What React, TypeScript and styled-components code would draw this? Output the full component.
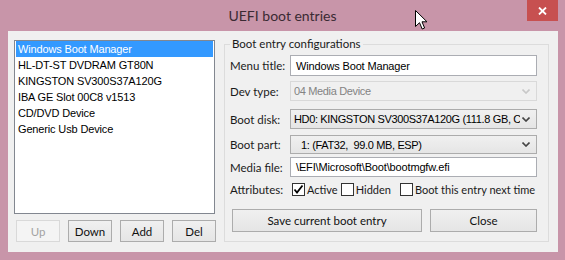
import React from "react";
import styled, { createGlobalStyle, css } from "styled-components";

const GlobalStyle = createGlobalStyle`
  html, body { margin: 0; padding: 0; background: #c895a9; }
  body { font-family: "Liberation Sans", Arial, sans-serif; }
  * { box-sizing: border-box; }
`;

const uiFont = `"Lato", "Liberation Sans", sans-serif`;
const ctlFont = `"Liberation Sans", Arial, sans-serif`;

const Window = styled.div`
  position: relative;
  width: 565px;
  height: 260px;
  background: #c895a9;
  display: flex;
  flex-direction: column;
  overflow: hidden;
`;

const TitleBar = styled.div`
  height: 31px;
  display: grid;
  grid-template-columns: 1fr auto 1fr;
  align-items: start;
`;

const Title = styled.div`
  font-family: ${uiFont};
  font-size: 14px;
  color: #3a2a33;
  line-height: 31px;
`;

const TitleRight = styled.div`
  display: flex;
  justify-content: flex-end;
  padding-right: 7px;
`;

const CloseButton = styled.div`
  width: 31px;
  height: 21px;
  background: #c75050;
  display: flex;
  align-items: center;
  justify-content: center;
`;

const Client = styled.div`
  flex: 1;
  margin: 0 7px 8px 8px;
  background: #f0f0f0;
  display: flex;
  align-items: flex-start;
  gap: 9px;
  padding: 5px 9px 10px 6px;
`;

const LeftColumn = styled.div`
  margin-top: 4px;
  width: 201px;
  flex: none;
  display: flex;
  flex-direction: column;
  gap: 6px;
`;

const ListBox = styled.div`
  height: 174px;
  background: #ffffff;
  border: 1px solid #828790;
  padding: 0 1px;
`;

const ListItem = styled.div<{ $selected?: boolean }>`
  height: 16px;
  line-height: 16px;
  padding-left: 2px;
  font-family: ${ctlFont};
  font-size: 11px;
  letter-spacing: -0.15px;
  color: #000;
  white-space: nowrap;
  ${(p) =>
    p.$selected &&
    css`
      background: #3399ff;
      color: #fff;
    `}
`;

const ButtonRow = styled.div`
  display: flex;
  gap: 8px;
  padding-left: 2px;
`;

const PushButton = styled.div<{ $w: number; $h: number; $disabled?: boolean }>`
  width: ${(p) => p.$w}px;
  height: ${(p) => p.$h}px;
  flex: none;
  display: flex;
  align-items: center;
  justify-content: center;
  font-family: ${uiFont};
  font-size: 11.5px;
  color: #111;
  border: 1px solid #acacac;
  background: linear-gradient(#f0f0f0, #e5e5e5);
  ${(p) =>
    p.$disabled &&
    css`
      color: #a3a3a3;
      border-color: #d9d9d9;
      background: #f4f4f4;
    `}
`;

const Group = styled.fieldset`
  margin: 0;
  width: 325px;
  min-width: 0;
  flex: none;
  height: 206px;
  border: 1px solid #dcdcdc;
  padding: 3px 11px 9px 5px;
  display: flex;
  flex-direction: column;
`;

const Legend = styled.legend`
  padding: 0 2px;
  font-family: ${uiFont};
  font-size: 11.5px;
  line-height: 16px;
  color: #1a1a1a;
`;

const FieldRow = styled.div<{ $mt: number; $h: number }>`
  margin-top: ${(p) => p.$mt}px;
  height: ${(p) => p.$h}px;
  display: flex;
  align-items: center;
  min-width: 0;
`;

const Label = styled.div`
  width: 60px;
  flex: none;
  font-family: ${uiFont};
  font-size: 11.5px;
  color: #1a1a1a;
  white-space: nowrap;
`;

const TextBox = styled.div`
  flex: 1;
  min-width: 0;
  height: 100%;
  background: #fff;
  border: 1px solid #abadb3;
  display: flex;
  align-items: center;
  padding-left: 5px;
  font-family: ${ctlFont};
  font-size: 11px;
  letter-spacing: -0.15px;
  color: #000;
  white-space: pre;
  overflow: hidden;
`;

const Combo = styled.div<{ $disabled?: boolean; $indent?: number }>`
  flex: 1;
  min-width: 0;
  height: 100%;
  display: flex;
  align-items: center;
  padding-left: ${(p) => p.$indent ?? 3}px;
  padding-right: 3px;
  font-family: ${ctlFont};
  font-size: 11px;
  letter-spacing: -0.35px;
  color: #000;
  white-space: pre;
  overflow: hidden;
  border: 1px solid #acacac;
  background: linear-gradient(#f0f0f0, #e5e5e5);
  ${(p) =>
    p.$disabled &&
    css`
      color: #838383;
      border-color: #d9d9d9;
      background: #f0f0f0;
    `}
`;

const ComboText = styled.span`
  flex: 1;
  min-width: 0;
  overflow: hidden;
`;

const Chevron = styled.svg`
  flex: none;
  margin-left: 2px;
  margin-right: 3px;
`;

const CheckRow = styled.div`
  display: flex;
  align-items: center;
`;

const CheckItem = styled.label<{ $ml: number }>`
  margin-left: ${(p) => p.$ml}px;
  display: flex;
  align-items: center;
  gap: 2px;
  font-family: ${uiFont};
  font-size: 11px;
  color: #1a1a1a;
  white-space: nowrap;
`;

const Box = styled.span`
  width: 13px;
  height: 13px;
  border: 1px solid #333;
  background: #fff;
  display: flex;
  align-items: center;
  justify-content: center;
`;

const ActionRow = styled.div`
  margin-top: 13px;
  margin-left: 2px;
  display: flex;
  gap: 8px;
`;

const Cursor = styled.svg`
  position: absolute;
  left: 415px;
  top: 10px;
`;

const ChevronIcon = ({ color }: { color: string }) => (
  <Chevron width="8" height="5" viewBox="0 0 8 5">
    <path d="M0.5 0.5 L4 4 L7.5 0.5" fill="none" stroke={color} strokeWidth="1.6" />
  </Chevron>
);

const Check = ({ checked, text, ml }: { checked?: boolean; text: string; ml: number }) => (
  <CheckItem $ml={ml}>
    <Box>
      {checked && (
        <svg width="11" height="11" viewBox="0 0 11 11">
          <path d="M1.5 5.5 L4 8.5 L9.5 1.5" fill="none" stroke="#000" strokeWidth="1.8" />
        </svg>
      )}
    </Box>
    {text}
  </CheckItem>
);

const entries = [
  "Windows Boot Manager",
  "HL-DT-ST DVDRAM GT80N",
  "KINGSTON SV300S37A120G",
  "IBA GE Slot 00C8 v1513",
  "CD/DVD Device",
  "Generic Usb Device",
];

export default function App() {
  return (
    <>
      <GlobalStyle />
      <Window>
        <TitleBar>
          <div />
          <Title>UEFI boot entries</Title>
          <TitleRight>
            <CloseButton>
              <svg width="9" height="8" viewBox="0 0 9 8">
                <path d="M1 0.5 L8 7.5 M8 0.5 L1 7.5" stroke="#fff" strokeWidth="1.8" />
              </svg>
            </CloseButton>
          </TitleRight>
        </TitleBar>
        <Client>
          <LeftColumn>
            <ListBox>
              {entries.map((e, i) => (
                <ListItem key={e} $selected={i === 0}>
                  {e}
                </ListItem>
              ))}
            </ListBox>
            <ButtonRow>
              <PushButton $w={44} $h={22} $disabled>
                Up
              </PushButton>
              <PushButton $w={44} $h={22}>Down</PushButton>
              <PushButton $w={44} $h={22}>Add</PushButton>
              <PushButton $w={44} $h={22}>Del</PushButton>
            </ButtonRow>
          </LeftColumn>
          <Group>
            <Legend>Boot entry configurations</Legend>
            <FieldRow $mt={0} $h={21}>
              <Label>Menu title:</Label>
              <TextBox>Windows Boot Manager</TextBox>
            </FieldRow>
            <FieldRow $mt={5} $h={20}>
              <Label>Dev type:</Label>
              <Combo $disabled>
                <ComboText>04 Media Device</ComboText>
                <ChevronIcon color="#c8c8c8" />
              </Combo>
            </FieldRow>
            <FieldRow $mt={8} $h={20}>
              <Label>Boot disk:</Label>
              <Combo>
                <ComboText>HD0: KINGSTON SV300S37A120G (111.8 GB, C</ComboText>
                <ChevronIcon color="#444" />
              </Combo>
            </FieldRow>
            <FieldRow $mt={6} $h={19}>
              <Label>Boot part:</Label>
              <Combo $indent={10}>
                <ComboText>1: (FAT32,  99.0 MB, ESP)</ComboText>
                <ChevronIcon color="#444" />
              </Combo>
            </FieldRow>
            <FieldRow $mt={3} $h={20}>
              <Label>Media file:</Label>
              <TextBox>\EFI\Microsoft\Boot\bootmgfw.efi</TextBox>
            </FieldRow>
            <FieldRow $mt={6} $h={13}>
              <Label>Attributes:</Label>
              <CheckRow>
                <Check checked text="Active" ml={2} />
                <Check text="Hidden" ml={3} />
                <Check text="Boot this entry next time" ml={9} />
              </CheckRow>
            </FieldRow>
            <ActionRow>
              <PushButton $w={190} $h={23}>Save current boot entry</PushButton>
              <PushButton $w={107} $h={23}>Close</PushButton>
            </ActionRow>
          </Group>
        </Client>
        <Cursor width="13" height="21" viewBox="0 0 13 21">
          <path
            d="M0.5 0.5 L0.5 16.5 L4.5 12.7 L7.2 19 L9.6 18 L7 11.8 L12 11.8 Z"
            fill="#fff"
            stroke="#000"
            strokeWidth="1"
          />
        </Cursor>
      </Window>
    </>
  );
}
